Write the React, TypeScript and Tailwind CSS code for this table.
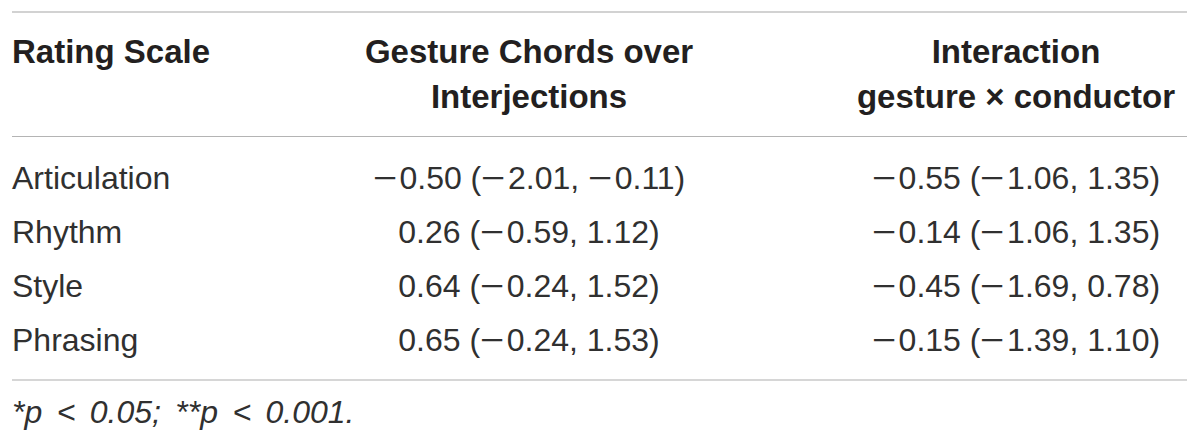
const rows = [
  { scale: "Articulation", chords: "\u22120.50 (\u22122.01, \u22120.11)", inter: "\u22120.55 (\u22121.06, 1.35)" },
  { scale: "Rhythm", chords: "0.26 (\u22120.59, 1.12)", inter: "\u22120.14 (\u22121.06, 1.35)" },
  { scale: "Style", chords: "0.64 (\u22120.24, 1.52)", inter: "\u22120.45 (\u22121.69, 0.78)" },
  { scale: "Phrasing", chords: "0.65 (\u22120.24, 1.53)", inter: "\u22120.15 (\u22121.39, 1.10)" },
];

// the source typesets minus signs as a long bar with a wide advance
function Num({ value }: { value: string }) {
  const parts = value.split("\u2212");
  return (
    <>
      {parts.map((p, i) => (
        <span key={i}>
          {i > 0 && <span className="inline-block origin-left scale-x-[1.3] mr-[8px]">{"\u2212"}</span>}
          {p}
        </span>
      ))}
    </>
  );
}

export default function App() {
  return (
    <div className="w-[1200px] h-[443px] bg-white px-[12px] pt-[11px] font-['Liberation_Sans',Arial,sans-serif] text-[#231f20] overflow-hidden">
      <div className="w-[1175px]">
        {/* Header */}
        <div className="grid grid-cols-[369px_296px_510px] border-t-2 border-b border-t-[#d2d2d2] border-b-[#b4b4b4] pt-[16px] h-[126px] text-[33px] leading-[45px] font-bold">
          <div className="whitespace-nowrap">Rating Scale</div>
          <div className="flex flex-col items-center whitespace-nowrap">
            <span>Gesture Chords over</span>
            <span>Interjections</span>
          </div>
          <div className="flex flex-col items-center whitespace-nowrap pl-[168px]">
            <span>Interaction</span>
            <span>gesture &times; conductor</span>
          </div>
        </div>

        {/* Body */}
        <div className="pt-[14px] pb-[12px] border-b-2 border-[#d6d6d6] text-[32px] leading-[54px] text-[#303030]">
          {rows.map((r) => (
            <div key={r.scale} className="grid grid-cols-[369px_296px_510px] whitespace-nowrap">
              <div>{r.scale}</div>
              <div className="flex justify-center">
                <span>
                  <Num value={r.chords} />
                </span>
              </div>
              <div className="flex justify-center pl-[168px]">
                <span>
                  <Num value={r.inter} />
                </span>
              </div>
            </div>
          ))}
        </div>

        {/* Footnote */}
        <p className="pt-[11px] text-[32px] leading-[40px] italic text-[#303030] [word-spacing:5.5px] whitespace-nowrap">
          *p &lt; 0.05; **p &lt; 0.001.
        </p>
      </div>
    </div>
  );
}
